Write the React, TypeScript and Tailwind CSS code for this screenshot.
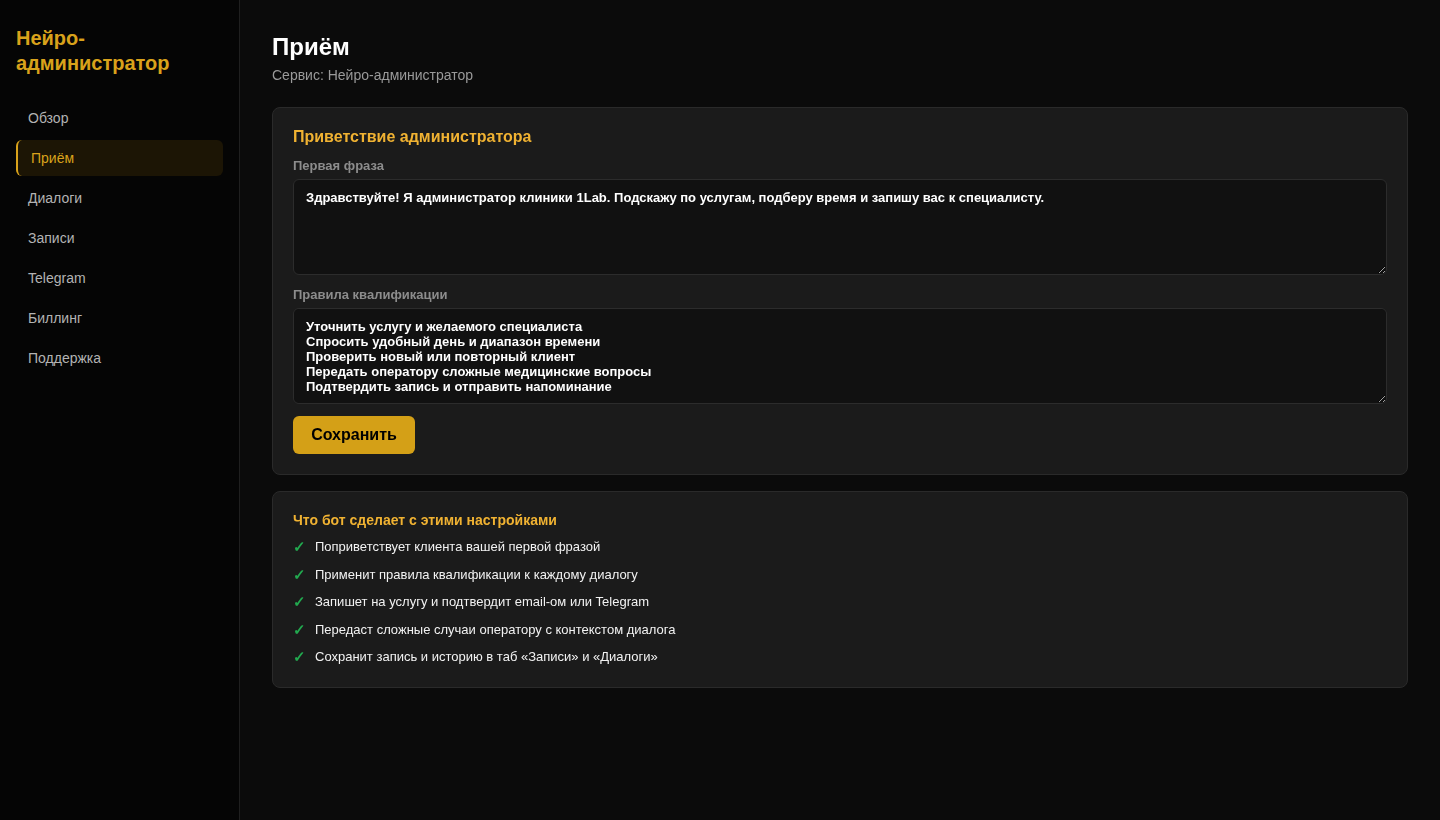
import React from 'react';

const navItems = ['Обзор', 'Приём', 'Диалоги', 'Записи', 'Telegram', 'Биллинг', 'Поддержка'];

const outcomes = [
  'Поприветствует клиента вашей первой фразой',
  'Применит правила квалификации к каждому диалогу',
  'Запишет на услугу и подтвердит email-ом или Telegram',
  'Передаст сложные случаи оператору с контекстом диалога',
  'Сохранит запись и историю в таб «Записи» и «Диалоги»',
];

const greeting =
  'Здравствуйте! Я администратор клиники 1Lab. Подскажу по услугам, подберу время и запишу вас к специалисту.';

const rules = [
  'Уточнить услугу и желаемого специалиста',
  'Спросить удобный день и диапазон времени',
  'Проверить новый или повторный клиент',
  'Передать оператору сложные медицинские вопросы',
  'Подтвердить запись и отправить напоминание',
].join('\n');

export default function App() {
  return (
    <div className="flex min-h-screen bg-[#0b0b0b] font-['Liberation_Sans',Arial,sans-serif]">
      {/* Sidebar */}
      <aside className="w-[240px] shrink-0 min-h-screen bg-[#050505] border-r border-[#1f1f1f] px-4 pt-[26px]">
        <div className="text-[20px] leading-[25px] font-bold text-[#d9a21b]">Нейро-администратор</div>
        <nav className="mt-6 flex flex-col gap-1">
          {navItems.map((item) =>
            item === 'Приём' ? (
              <div
                key={item}
                className="h-9 flex items-center rounded-md border-l-2 border-[#d9a21b] bg-[#1c1505] pl-[13px] text-sm text-[#d9a21b]"
              >
                {item}
              </div>
            ) : (
              <div key={item} className="h-9 flex items-center px-3 text-sm text-[#b3b3b3]">
                {item}
              </div>
            )
          )}
        </nav>
      </aside>

      {/* Main */}
      <main className="flex-1 px-8 pt-8 pb-10">
        <h1 className="text-2xl leading-[29px] font-bold text-white">Приём</h1>
        <p className="mt-1 text-sm leading-5 text-[#9a9a9a]">Сервис: Нейро-администратор</p>

        {/* Greeting settings */}
        <section className="mt-[22px] rounded-lg border border-[#2a2a2a] bg-[#1b1b1b] p-5">
          <h2 className="text-base leading-[18px] font-bold text-[#f0b232]">Приветствие администратора</h2>

          <label className="mt-3 block text-[13px] leading-[15px] font-bold text-[#8c8c8c]">Первая фраза</label>
          <textarea
            defaultValue={greeting}
            className="mt-[6px] block w-full h-[96px] rounded-md border border-[#2c2c2c] bg-[#111111] px-3 py-[10px] text-[13px] leading-[15px] font-bold text-white outline-none"
          />

          <label className="mt-3 block text-[13px] leading-[15px] font-bold text-[#8c8c8c]">Правила квалификации</label>
          <textarea
            defaultValue={rules}
            className="mt-[6px] block w-full h-[96px] rounded-md border border-[#2c2c2c] bg-[#111111] px-3 py-[10px] text-[13px] leading-[15px] font-bold text-white outline-none"
          />

          <button className="mt-3 h-[38px] w-[122px] rounded-md bg-[#d4a017] text-base font-bold text-black">
            Сохранить
          </button>
        </section>

        {/* Outcomes */}
        <section className="mt-4 rounded-lg border border-[#2a2a2a] bg-[#1b1b1b] px-5 pt-5 pb-[22px]">
          <h3 className="text-sm leading-4 font-bold text-[#f0b232]">Что бот сделает с этими настройками</h3>
          <ul className="mt-[11px] flex flex-col gap-3">
            {outcomes.map((text) => (
              <li key={text} className="flex items-center text-[13px] leading-[15.5px] text-[#f2f2f2]">
                <span className="w-[22px] text-[15px] font-bold text-[#22a94f]">✓</span>
                {text}
              </li>
            ))}
          </ul>
        </section>
      </main>
    </div>
  );
}
